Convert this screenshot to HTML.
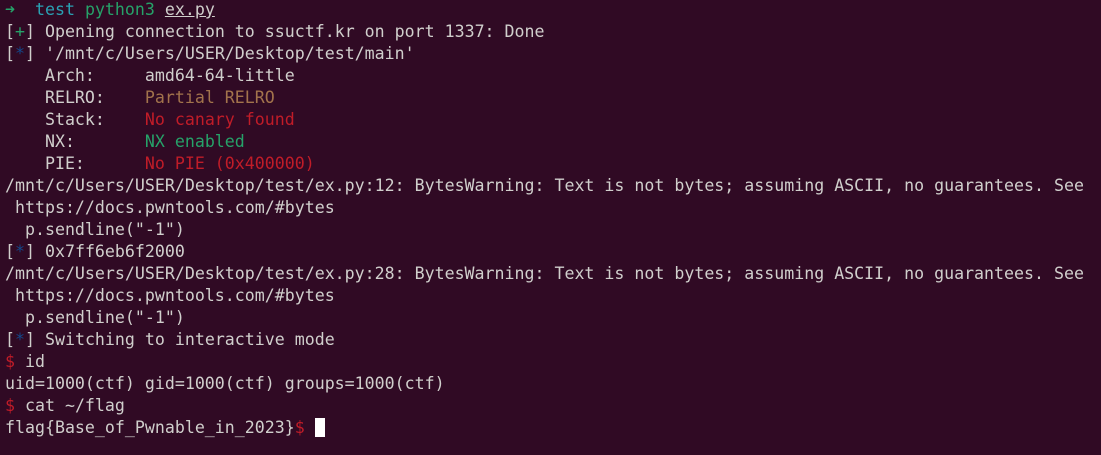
<!DOCTYPE html>
<html><head><style>
html,body{margin:0;padding:0;background:#300a24;width:1101px;height:455px;overflow:hidden}
pre{position:absolute;left:5px;top:-1px;margin:0;font-family:"DejaVu Sans Mono","Liberation Mono",monospace;font-size:16.6px;line-height:22px;color:#d0cfcc;white-space:pre}
.g{color:#26a269}.c{color:#2aa1b3}.r{color:#c01c28}.b{color:#a2734c}.bl{color:#12488b}
.u{text-decoration:underline}
.cur{display:inline-block;width:10px;height:19px;background:#fff;vertical-align:-4px}
</style></head><body><pre><span class="g">➜</span>  <span class="c">test</span> <span class="g">python3</span> <span class="u">ex.py</span>
[<span class="g">+</span>] Opening connection to ssuctf.kr on port 1337: Done
[<span class="bl">*</span>] '/mnt/c/Users/USER/Desktop/test/main'
    Arch:     amd64-64-little
    RELRO:    <span class="b">Partial RELRO</span>
    Stack:    <span class="r">No canary found</span>
    NX:       <span class="g">NX enabled</span>
    PIE:      <span class="r">No PIE (0x400000)</span>
/mnt/c/Users/USER/Desktop/test/ex.py:12: BytesWarning: Text is not bytes; assuming ASCII, no guarantees. See
 https://docs.pwntools.com/#bytes
  p.sendline("-1")
[<span class="bl">*</span>] 0x7ff6eb6f2000
/mnt/c/Users/USER/Desktop/test/ex.py:28: BytesWarning: Text is not bytes; assuming ASCII, no guarantees. See
 https://docs.pwntools.com/#bytes
  p.sendline("-1")
[<span class="bl">*</span>] Switching to interactive mode
<span class="r">$</span> id
uid=1000(ctf) gid=1000(ctf) groups=1000(ctf)
<span class="r">$</span> cat ~/flag
flag{Base_of_Pwnable_in_2023}<span class="r">$</span> <span class="cur"></span></pre></body></html>
